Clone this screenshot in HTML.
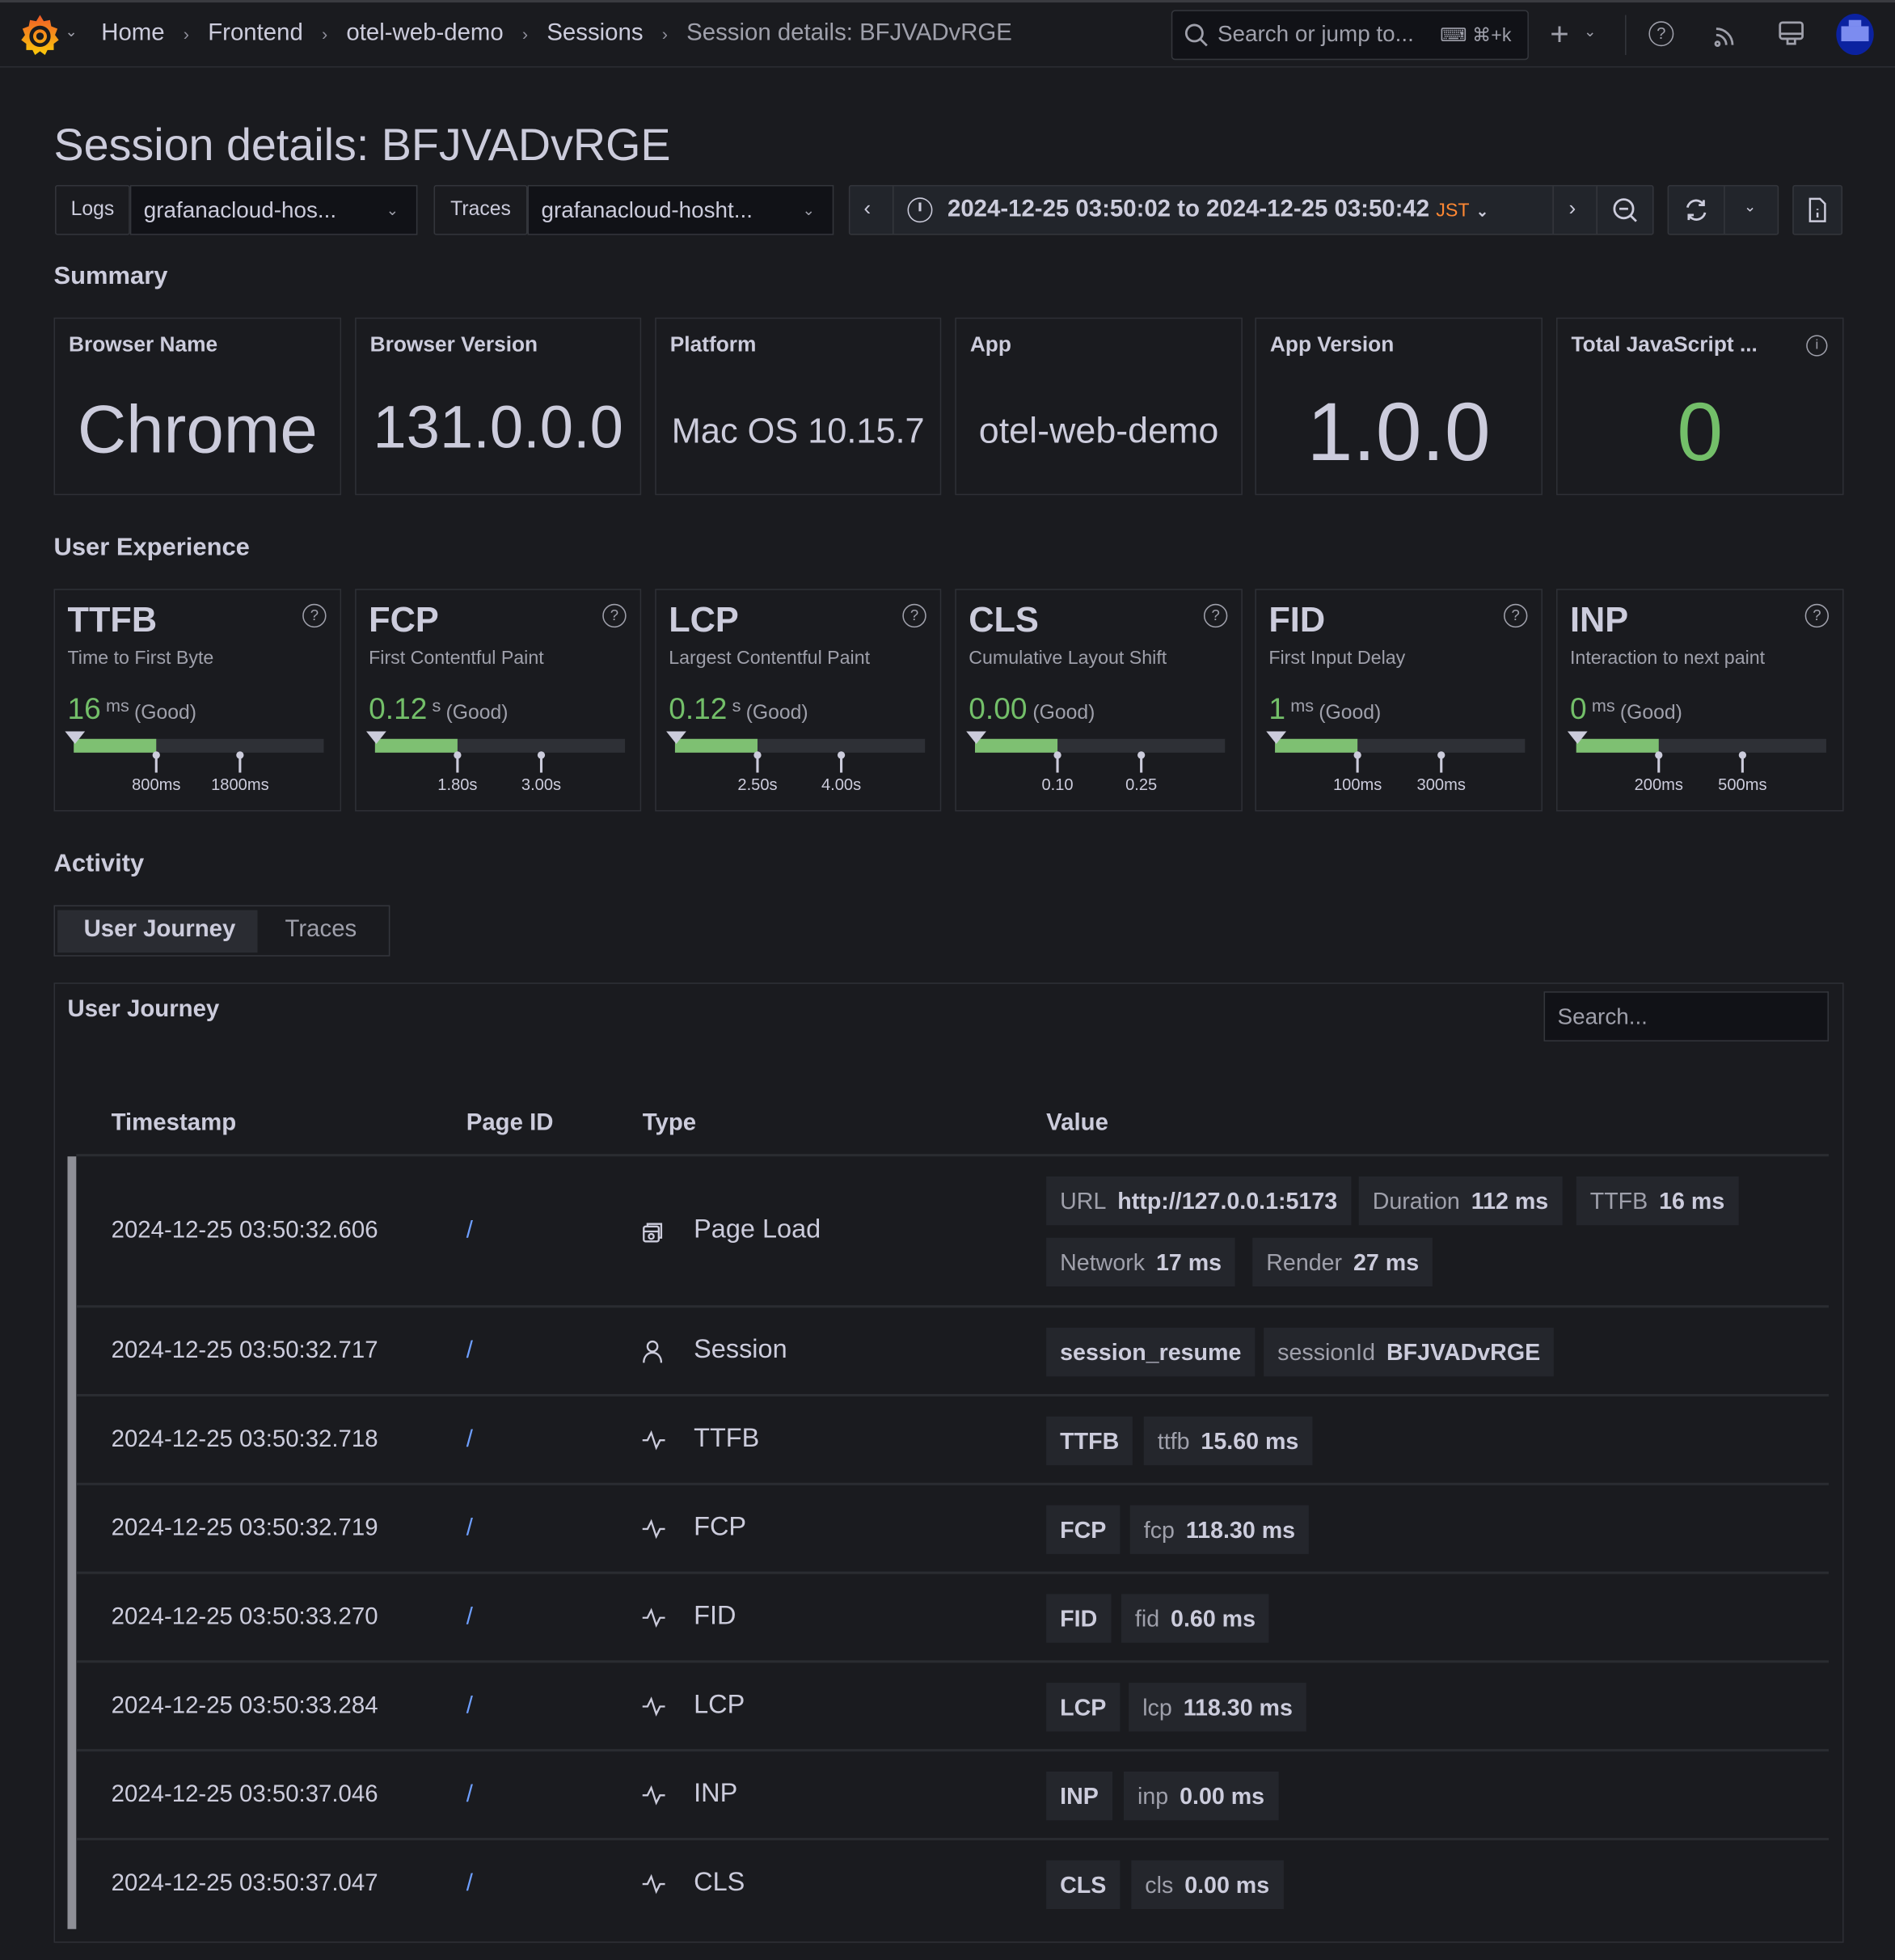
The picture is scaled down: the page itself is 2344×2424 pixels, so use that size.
<!DOCTYPE html>
<html><head><meta charset="utf-8"><style>
*{box-sizing:border-box;margin:0;padding:0}
html,body{width:2344px;height:2424px;overflow:hidden;background:#1a1b1f}
#w{position:absolute;left:0;top:0;width:1516px;height:1568px;transform:scale(1.54617);transform-origin:0 0;background:#1a1b1f;font-family:"Liberation Sans",sans-serif;color:#ccccdc}
.a{position:absolute}
.top{left:0;top:0;width:1516px;height:54px;background:#1a1b1f;border-bottom:1px solid #2c2d33;border-top:2px solid #3a3b40}
.bc{top:16px;font-size:19px;color:#ccccdc;white-space:nowrap}
.sep{color:#8e8e9a;font-size:14px;margin:0 15px}
.h2{font-size:20px;font-weight:bold;color:#ccccdc}
.panel{border:1px solid #2e3036;background:#1a1b1f}
.pt{font-size:17px;font-weight:bold;color:#ccccdc;position:absolute;left:11px;top:11px;white-space:nowrap}
.big{position:absolute;left:0;right:0;top:50px;text-align:center;color:#ccccdc}
.btn{border:1px solid #34363c;background:#22252b;border-radius:2px}
.inp{background:#111217;border:1px solid #34363c}
.ux .t{position:absolute;left:10px;top:8px;font-size:28px;font-weight:bold}
.ux .s{position:absolute;left:10px;top:46px;font-size:15px;color:#9fa0ab;white-space:nowrap}
.ux .v{position:absolute;left:10px;top:82px;white-space:nowrap;color:#9fa0ab;font-size:16px}
.ux .v b{color:#73bf69;font-size:24px;font-weight:normal}
.ux .v i{font-style:normal;font-size:14px;vertical-align:6px;margin:0 4px}
.ux .q{position:absolute;right:11px;top:11px;width:19px;height:19px;border:1.5px solid #9fa0ab;border-radius:50%;font-size:12px;text-align:center;line-height:16px;color:#9fa0ab}
.bar{position:absolute;left:15px;top:119px;width:200px;height:11px;background:#2e3036}
.bar div{position:absolute;left:0;top:0;width:66px;height:11px;background:#7ec072}
.tri{position:absolute;left:8px;top:113px;width:0;height:0;border-left:8px solid transparent;border-right:8px solid transparent;border-top:10px solid #ccccdc}
.tk{position:absolute;top:130px;width:2px;height:16px;background:#ccccdc}
.tk:before{content:"";position:absolute;left:-2px;top:-1px;width:6px;height:6px;border-radius:50%;background:#ccccdc}
.tl{position:absolute;top:148px;font-size:13px;color:#ccccdc;width:80px;margin-left:-40px;text-align:center}
.row{position:absolute;left:61px;width:1402px;border-bottom:2px solid #2a2c31;font-size:19px}
.row .ts{position:absolute;left:28px}
.row .pid{position:absolute;left:312px;color:#6e9fff}
.row .ic{position:absolute;left:452px;color:#ccccdc}
.row .ty{position:absolute;left:494px;font-size:21px}
.tag{position:absolute;height:39px;background:#24262c;font-size:18.5px;line-height:39px;padding:0 11px;white-space:nowrap;color:#ccccdc;font-weight:bold}
.tag span{color:#9fa0ab;font-weight:normal;margin-right:9px}
.hd{position:absolute;top:888px;font-size:19px;font-weight:bold}
</style></head><body><div id="w">
<div class="a top"></div>
<svg class="a" style="left:16px;top:11px" width="32" height="34" viewBox="0 0 32 34"><defs><linearGradient id="g" x1="0" y1="1" x2="0" y2="0"><stop offset="0" stop-color="#fbca0a"/><stop offset="1" stop-color="#f05a28"/></linearGradient></defs><path d="M16 1l3 5 5-1 1 5 5 2-2 5 3 4-4 3 0 5-5 0-2 4-4-3-4 3-2-4-5 0 0-5-4-3 3-4-2-5 5-2 1-5 5 1z" fill="url(#g)"/><circle cx="16" cy="18" r="7" fill="none" stroke="#1a1b1f" stroke-width="3"/><circle cx="16" cy="18" r="3" fill="#1a1b1f"/></svg>
<div class="a" style="left:52px;top:18px;font-size:12px;color:#9fa0ab">⌄</div>
<div class="a bc" style="left:81px">Home<span class="sep">›</span>Frontend<span class="sep">›</span>otel-web-demo<span class="sep">›</span>Sessions<span class="sep">›</span><span style="color:#9fa0ab">Session details: BFJVADvRGE</span></div>
<div class="a inp" style="left:937px;top:8px;width:286px;height:40px;border-radius:3px"></div>
<svg class="a" style="left:947px;top:18px" width="20" height="20" viewBox="0 0 20 20" fill="none" stroke="#9fa0ab" stroke-width="1.8"><circle cx="8.5" cy="8.5" r="6.5"/><path d="M13.5 13.5l5 5"/></svg>
<div class="a" style="left:974px;top:17px;font-size:18px;color:#9fa0ab">Search or jump to...</div>
<div class="a" style="left:1152px;top:19px;font-size:15px;color:#9fa0ab">⌨ ⌘+k</div>
<div class="a" style="left:1240px;top:12px;font-size:26px;color:#9fa0ab;font-weight:300">+</div>
<div class="a" style="left:1267px;top:18px;font-size:12px;color:#9fa0ab">⌄</div>
<div class="a" style="left:1300px;top:12px;width:1px;height:32px;background:#34363c"></div>
<div class="a" style="left:1319px;top:17px;width:20px;height:20px;border:1.6px solid #9fa0ab;border-radius:50%;font-size:13px;text-align:center;line-height:17px;color:#9fa0ab">?</div>
<svg class="a" style="left:1370px;top:17px" width="22" height="22" viewBox="0 0 22 22" fill="none" stroke="#9fa0ab" stroke-width="1.8"><circle cx="4" cy="18" r="1.6"/><path d="M3 11a8 8 0 0 1 8 8M3 6a13 13 0 0 1 13 13"/></svg>
<svg class="a" style="left:1422px;top:16px" width="22" height="22" viewBox="0 0 22 22" fill="none" stroke="#9fa0ab" stroke-width="1.8"><rect x="2" y="2" width="18" height="13" rx="2"/><path d="M2 11h18M8 15v4h6v-4"/></svg>
<div class="a" style="left:1469px;top:11px;width:30px;height:33px;border-radius:50%;background:#0b22a0"></div>
<div class="a" style="left:1473px;top:21px;width:22px;height:12px;background:#7c8cf0"></div>
<div class="a" style="left:1479px;top:16px;width:10px;height:5px;background:#7c8cf0"></div>

<div class="a" style="left:43px;top:95px;font-size:36px;color:#ccccdc">Session details: BFJVADvRGE</div>

<div class="a btn" style="left:44px;top:148px;width:60px;height:40px;font-size:16px;line-height:38px;text-align:center;background:#1a1b1f">Logs</div>
<div class="a inp" style="left:104px;top:148px;width:230px;height:40px;font-size:18px;line-height:38px;padding-left:10px">grafanacloud-hos...<span style="position:absolute;right:14px;font-size:12px;color:#9fa0ab">⌄</span></div>
<div class="a btn" style="left:347px;top:148px;width:75px;height:40px;font-size:16px;line-height:38px;text-align:center;background:#1a1b1f">Traces</div>
<div class="a inp" style="left:422px;top:148px;width:245px;height:40px;font-size:18px;line-height:38px;padding-left:10px">grafanacloud-hosht...<span style="position:absolute;right:14px;font-size:12px;color:#9fa0ab">⌄</span></div>
<div class="a btn" style="left:679px;top:148px;width:644px;height:40px"></div>
<div class="a" style="left:714px;top:149px;width:1px;height:38px;background:#34363c"></div>
<div class="a" style="left:1242px;top:149px;width:1px;height:38px;background:#34363c"></div>
<div class="a" style="left:1277px;top:149px;width:1px;height:38px;background:#34363c"></div>
<div class="a" style="left:691px;top:157px;font-size:17px">‹</div>
<div class="a" style="left:726px;top:158px;width:20px;height:20px;border:1.8px solid #ccccdc;border-radius:50%"></div>
<div class="a" style="left:735px;top:162px;width:2px;height:7px;background:#ccccdc"></div>
<div class="a" style="left:758px;top:157px;font-size:19px;font-weight:bold;white-space:nowrap">2024-12-25 03:50:02 to 2024-12-25 03:50:42 <span style="color:#ff8833;font-size:15px;font-weight:normal">JST</span> <span style="font-size:12px">⌄</span></div>
<div class="a" style="left:1255px;top:157px;font-size:17px">›</div>
<svg class="a" style="left:1289px;top:157px" width="22" height="22" viewBox="0 0 22 22" fill="none" stroke="#ccccdc" stroke-width="1.8"><circle cx="10" cy="10" r="7.5"/><path d="M15.5 15.5l4.5 4.5M6.5 10h7"/></svg>
<div class="a btn" style="left:1334px;top:148px;width:89px;height:40px"></div>
<div class="a" style="left:1379px;top:149px;width:1px;height:38px;background:#34363c"></div>
<svg class="a" style="left:1346px;top:157px" width="22" height="22" viewBox="0 0 22 22" fill="none" stroke="#ccccdc" stroke-width="1.8"><path d="M4 9a7 7 0 0 1 13-2M18 13a7 7 0 0 1-13 2M17 3v4h-4M5 19v-4h4"/></svg>
<div class="a" style="left:1395px;top:158px;font-size:12px">⌄</div>
<div class="a btn" style="left:1434px;top:148px;width:40px;height:40px"></div>
<svg class="a" style="left:1445px;top:158px" width="18" height="20" viewBox="0 0 18 20" fill="none" stroke="#ccccdc" stroke-width="1.6"><path d="M3 1h8l4 4v14H3z M9 9v1M9 12v4"/></svg>

<div class="a h2" style="left:43px;top:210px">Summary</div>
<div class="a panel" style="left:43px;top:254px;width:230px;height:142px"><div class="pt">Browser Name</div><div class="big" style="top:58px;font-size:54px">Chrome</div></div>
<div class="a panel" style="left:284px;top:254px;width:229px;height:142px"><div class="pt">Browser Version</div><div class="big" style="top:60px;font-size:48px">131.0.0.0</div></div>
<div class="a panel" style="left:524px;top:254px;width:229px;height:142px"><div class="pt">Platform</div><div class="big" style="top:74px;font-size:28px">Mac OS 10.15.7</div></div>
<div class="a panel" style="left:764px;top:254px;width:230px;height:142px"><div class="pt">App</div><div class="big" style="top:74px;font-size:29px">otel-web-demo</div></div>
<div class="a panel" style="left:1004px;top:254px;width:230px;height:142px"><div class="pt">App Version</div><div class="big" style="top:52px;font-size:66px">1.0.0</div></div>
<div class="a panel" style="left:1245px;top:254px;width:230px;height:142px"><div class="pt">Total JavaScript ...</div><div style="position:absolute;right:12px;top:13px;width:17px;height:17px;border:1.5px solid #9fa0ab;border-radius:50%;font-size:11px;text-align:center;line-height:14px;color:#9fa0ab">i</div><div class="big" style="top:52px;font-size:66px;color:#73bf69">0</div></div>

<div class="a h2" style="left:43px;top:427px">User Experience</div>
<div class="a panel ux" style="left:43px;top:471px;width:230px;height:178px"><div class="t">TTFB</div><div class="q">?</div><div class="s">Time to First Byte</div><div class="v"><b>16</b><i>ms</i>(Good)</div><div class="bar"><div></div></div><div class="tri"></div><div class="tk" style="left:80px"></div><div class="tk" style="left:147px"></div><div class="tl" style="left:81px">800ms</div><div class="tl" style="left:148px">1800ms</div></div>
<div class="a panel ux" style="left:284px;top:471px;width:229px;height:178px"><div class="t">FCP</div><div class="q">?</div><div class="s">First Contentful Paint</div><div class="v"><b>0.12</b><i>s</i>(Good)</div><div class="bar"><div></div></div><div class="tri"></div><div class="tk" style="left:80px"></div><div class="tk" style="left:147px"></div><div class="tl" style="left:81px">1.80s</div><div class="tl" style="left:148px">3.00s</div></div>
<div class="a panel ux" style="left:524px;top:471px;width:229px;height:178px"><div class="t">LCP</div><div class="q">?</div><div class="s">Largest Contentful Paint</div><div class="v"><b>0.12</b><i>s</i>(Good)</div><div class="bar"><div></div></div><div class="tri"></div><div class="tk" style="left:80px"></div><div class="tk" style="left:147px"></div><div class="tl" style="left:81px">2.50s</div><div class="tl" style="left:148px">4.00s</div></div>
<div class="a panel ux" style="left:764px;top:471px;width:230px;height:178px"><div class="t">CLS</div><div class="q">?</div><div class="s">Cumulative Layout Shift</div><div class="v"><b>0.00</b> (Good)</div><div class="bar"><div></div></div><div class="tri"></div><div class="tk" style="left:80px"></div><div class="tk" style="left:147px"></div><div class="tl" style="left:81px">0.10</div><div class="tl" style="left:148px">0.25</div></div>
<div class="a panel ux" style="left:1004px;top:471px;width:230px;height:178px"><div class="t">FID</div><div class="q">?</div><div class="s">First Input Delay</div><div class="v"><b>1</b><i>ms</i>(Good)</div><div class="bar"><div></div></div><div class="tri"></div><div class="tk" style="left:80px"></div><div class="tk" style="left:147px"></div><div class="tl" style="left:81px">100ms</div><div class="tl" style="left:148px">300ms</div></div>
<div class="a panel ux" style="left:1245px;top:471px;width:230px;height:178px"><div class="t">INP</div><div class="q">?</div><div class="s">Interaction to next paint</div><div class="v"><b>0</b><i>ms</i>(Good)</div><div class="bar"><div></div></div><div class="tri"></div><div class="tk" style="left:80px"></div><div class="tk" style="left:147px"></div><div class="tl" style="left:81px">200ms</div><div class="tl" style="left:148px">500ms</div></div>

<div class="a h2" style="left:43px;top:680px">Activity</div>
<div class="a" style="left:43px;top:724px;width:269px;height:41px;border:1px solid #34363c"></div>
<div class="a" style="left:46px;top:728px;width:160px;height:34px;background:#2a2c32"></div>
<div class="a" style="left:67px;top:733px;font-size:19px;font-weight:bold">User Journey</div>
<div class="a" style="left:228px;top:733px;font-size:19px;color:#9fa0ab">Traces</div>

<div class="a panel" style="left:43px;top:786px;width:1432px;height:768px"></div>
<div class="a" style="left:54px;top:797px;font-size:19px;font-weight:bold">User Journey</div>
<div class="a inp" style="left:1235px;top:793px;width:228px;height:40px;font-size:18px;line-height:38px;padding-left:10px;color:#9fa0ab">Search...</div>
<div class="hd" style="left:89px">Timestamp</div><div class="hd" style="left:373px">Page ID</div><div class="hd" style="left:514px">Type</div><div class="hd" style="left:837px">Value</div>
<div class="a" style="left:61px;top:923px;width:1402px;height:2px;background:#2a2c31"></div>
<div class="a" style="left:54px;top:925px;width:7px;height:618px;background:#8e8f96"></div>

<div class="row" style="top:925px;height:121px"><div class="ts" style="top:49px">2024-12-25 03:50:32.606</div><div class="pid" style="top:49px">/</div>
<svg class="ic" style="top:52px" width="18" height="18" viewBox="0 0 18 18" fill="none" stroke="#ccccdc" stroke-width="1.5"><rect x="2" y="4" width="12" height="12" rx="1.5"/><path d="M5 4V2h11v11h-2M2 8h12"/><circle cx="8" cy="12" r="2"/></svg>
<div class="ty" style="top:47px">Page Load</div></div>
<div class="tag" style="left:837px;top:941px"><span>URL</span>http://127.0.0.1:5173</div>
<div class="tag" style="left:1087px;top:941px"><span>Duration</span>112 ms</div>
<div class="tag" style="left:1261px;top:941px"><span>TTFB</span>16 ms</div>
<div class="tag" style="left:837px;top:990px"><span>Network</span>17 ms</div>
<div class="tag" style="left:1002px;top:990px"><span>Render</span>27 ms</div>

<div class="row" style="top:1046px;height:71px"><div class="ts" style="top:24px">2024-12-25 03:50:32.717</div><div class="pid" style="top:24px">/</div>
<svg class="ic" style="top:25px" width="18" height="20" viewBox="0 0 18 20" fill="none" stroke="#ccccdc" stroke-width="1.5"><circle cx="9" cy="6" r="4"/><path d="M2 19c0-5 3-8 7-8s7 3 7 8"/></svg>
<div class="ty" style="top:22px">Session</div></div>
<div class="tag" style="left:837px;top:1062px">session_resume</div>
<div class="tag" style="left:1011px;top:1062px"><span>sessionId</span>BFJVADvRGE</div>

<div class="row" style="top:1117px;height:71px"><div class="ts" style="top:24px">2024-12-25 03:50:32.718</div><div class="pid" style="top:24px">/</div><svg class="ic" style="top:26px" width="20" height="18" viewBox="0 0 20 18" fill="none" stroke="#ccccdc" stroke-width="1.5"><path d="M1 9h4l3-6 4 12 3-6h4"/></svg><div class="ty" style="top:22px">TTFB</div></div>
<div class="tag" style="left:837px;top:1133px">TTFB</div><div class="tag" style="left:915px;top:1133px"><span>ttfb</span>15.60 ms</div>

<div class="row" style="top:1188px;height:71px"><div class="ts" style="top:24px">2024-12-25 03:50:32.719</div><div class="pid" style="top:24px">/</div><svg class="ic" style="top:26px" width="20" height="18" viewBox="0 0 20 18" fill="none" stroke="#ccccdc" stroke-width="1.5"><path d="M1 9h4l3-6 4 12 3-6h4"/></svg><div class="ty" style="top:22px">FCP</div></div>
<div class="tag" style="left:837px;top:1204px">FCP</div><div class="tag" style="left:904px;top:1204px"><span>fcp</span>118.30 ms</div>

<div class="row" style="top:1259px;height:71px"><div class="ts" style="top:24px">2024-12-25 03:50:33.270</div><div class="pid" style="top:24px">/</div><svg class="ic" style="top:26px" width="20" height="18" viewBox="0 0 20 18" fill="none" stroke="#ccccdc" stroke-width="1.5"><path d="M1 9h4l3-6 4 12 3-6h4"/></svg><div class="ty" style="top:22px">FID</div></div>
<div class="tag" style="left:837px;top:1275px">FID</div><div class="tag" style="left:897px;top:1275px"><span>fid</span>0.60 ms</div>

<div class="row" style="top:1330px;height:71px"><div class="ts" style="top:24px">2024-12-25 03:50:33.284</div><div class="pid" style="top:24px">/</div><svg class="ic" style="top:26px" width="20" height="18" viewBox="0 0 20 18" fill="none" stroke="#ccccdc" stroke-width="1.5"><path d="M1 9h4l3-6 4 12 3-6h4"/></svg><div class="ty" style="top:22px">LCP</div></div>
<div class="tag" style="left:837px;top:1346px">LCP</div><div class="tag" style="left:903px;top:1346px"><span>lcp</span>118.30 ms</div>

<div class="row" style="top:1401px;height:71px"><div class="ts" style="top:24px">2024-12-25 03:50:37.046</div><div class="pid" style="top:24px">/</div><svg class="ic" style="top:26px" width="20" height="18" viewBox="0 0 20 18" fill="none" stroke="#ccccdc" stroke-width="1.5"><path d="M1 9h4l3-6 4 12 3-6h4"/></svg><div class="ty" style="top:22px">INP</div></div>
<div class="tag" style="left:837px;top:1417px">INP</div><div class="tag" style="left:899px;top:1417px"><span>inp</span>0.00 ms</div>

<div class="row" style="top:1472px;height:71px;border-bottom:none"><div class="ts" style="top:24px">2024-12-25 03:50:37.047</div><div class="pid" style="top:24px">/</div><svg class="ic" style="top:26px" width="20" height="18" viewBox="0 0 20 18" fill="none" stroke="#ccccdc" stroke-width="1.5"><path d="M1 9h4l3-6 4 12 3-6h4"/></svg><div class="ty" style="top:22px">CLS</div></div>
<div class="tag" style="left:837px;top:1488px">CLS</div><div class="tag" style="left:905px;top:1488px"><span>cls</span>0.00 ms</div>
</div></body></html>
